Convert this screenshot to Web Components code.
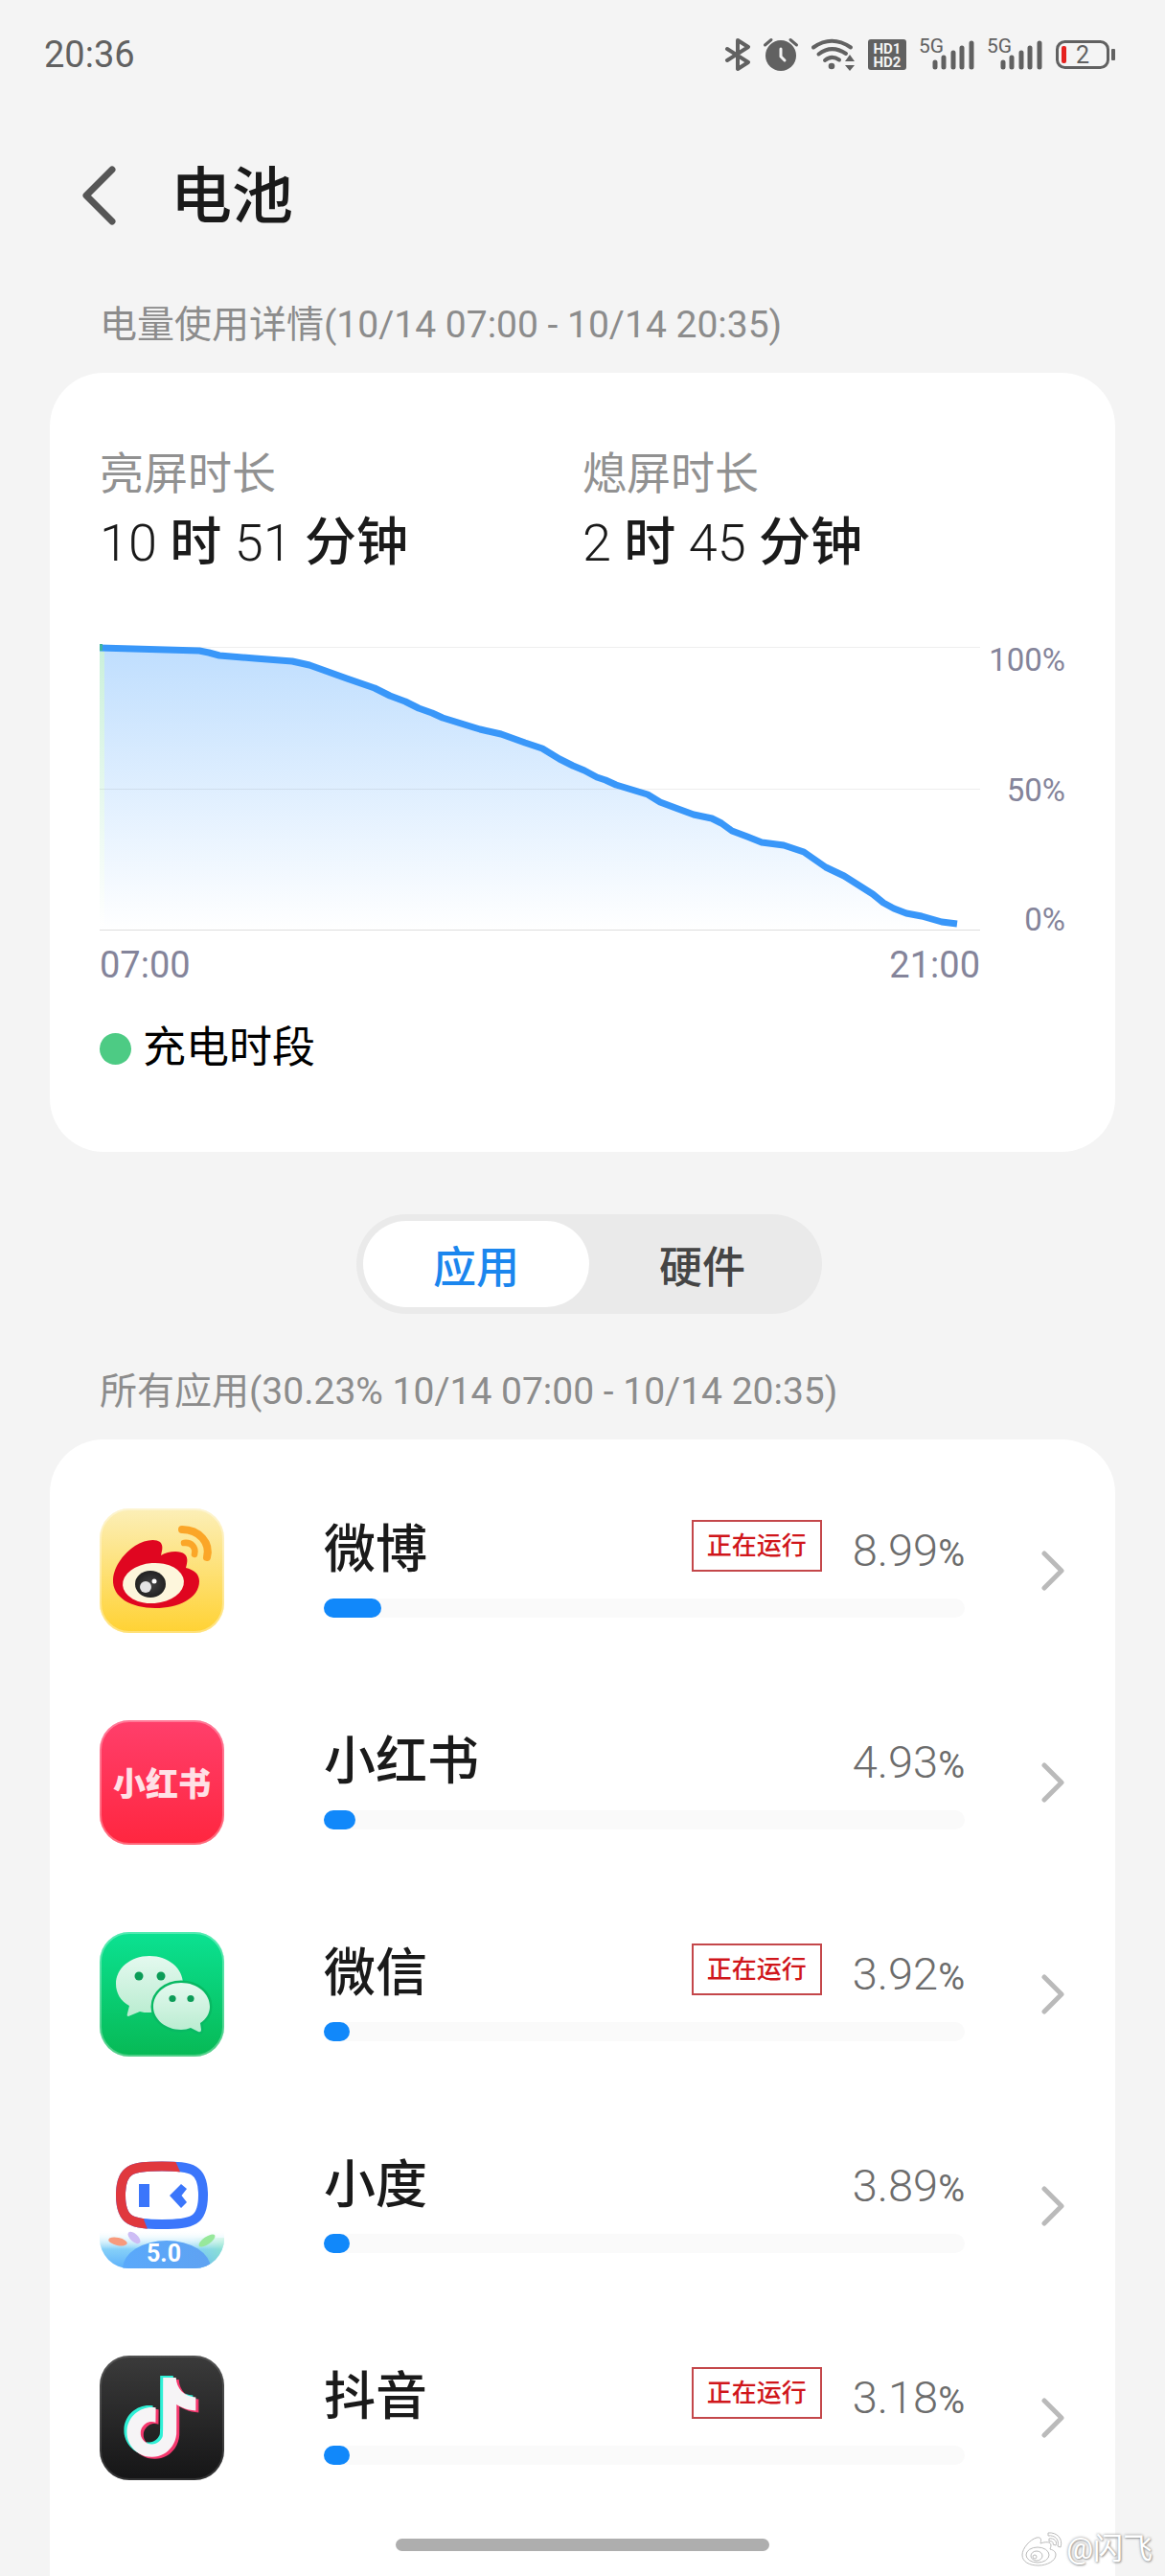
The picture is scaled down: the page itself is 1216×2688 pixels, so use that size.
<!DOCTYPE html>
<html lang="zh-CN">
<head>
<meta charset="utf-8">
<meta name="viewport" content="width=device-width, initial-scale=1">
<title>电池</title>
<style>
    body {
        margin: 0;
        background: #f4f4f4;
        color: #1a1a1a;
        font-family: Roboto, "Noto Sans CJK SC", sans-serif;
    }
</style>
</head>
<body>
<battery-page></battery-page>

<script>
// Drawings for the app icons, all on a 130x130 box
const APP_ICONS = {
    weibo: `
        <defs>
            <linearGradient id="bg" x2="0" y2="1"><stop offset="0" stop-color="#fcefb8"/><stop offset="1" stop-color="#ffd233"/></linearGradient>
            <radialGradient id="pupil"><stop offset="0" stop-color="#444"/><stop offset="1" stop-color="#222"/></radialGradient>
        </defs>
        <rect width="130" height="130" rx="31" fill="url(#bg)"/>
        <path d="M14 74C15 60 26 46 37 39C46 33 58 31 63 35C67 39 65 44 64 49C71 45 83 43 89 48C93 52 91 58 90 62C98 64 104 68 104 76C104 94 82 104 58 104C33 104 13 93 14 74Z" fill="#e00620"/>
        <ellipse cx="56" cy="78" rx="32" ry="21" fill="#fdf6dc" transform="rotate(-4 56 78)"/>
        <ellipse cx="53" cy="79" rx="16" ry="14" fill="url(#pupil)"/>
        <circle cx="48" cy="82" r="6" fill="#e4e4e4"/>
        <circle cx="57" cy="76" r="2.5" fill="#fff"/>
        <path d="M86 22C104 22 116 36 112 51" fill="none" stroke="#fba628" stroke-width="8" stroke-linecap="round"/>
        <path d="M88 36C96 35 101 41 99 48" fill="none" stroke="#fba628" stroke-width="6.5" stroke-linecap="round"/>
        <rect x="1" y="1" width="128" height="128" rx="30" fill="none" stroke="#fff" stroke-opacity=".35" stroke-width="2"/>`,
    redbook: `
        <defs><linearGradient id="bg" x2="0" y2="1"><stop offset="0" stop-color="#ff3f6b"/><stop offset="1" stop-color="#ff263f"/></linearGradient></defs>
        <rect width="130" height="130" rx="31" fill="url(#bg)"/>
        <text x="65" y="79" text-anchor="middle" font-size="34" font-weight="900" fill="#ffe0e6">小红书</text>
        <rect x="1" y="1" width="128" height="128" rx="30" fill="none" stroke="#fff" stroke-opacity=".3" stroke-width="2"/>`,
    wechat: `
        <defs>
            <linearGradient id="bg" x2="0" y2="1"><stop offset="0" stop-color="#0be292"/><stop offset="1" stop-color="#07b955"/></linearGradient>
            <linearGradient id="bubble" x2="0" y2="1"><stop offset="0" stop-color="#e4f9ef"/><stop offset="1" stop-color="#b9ecd0"/></linearGradient>
        </defs>
        <rect width="130" height="130" rx="31" fill="url(#bg)"/>
        <path d="M52 25C72 25 87 38 87 54C87 71 72 84 52 84C48 84 45 84 42 83L30 88Q28 88 29 85L31 77C22 72 17 64 17 54C17 38 32 25 52 25Z" fill="url(#bubble)"/>
        <path d="M85 53C102 53 115 64 115 78C115 85 111 91 105 95L106 102Q106 105 103 104L95 100C92 101 89 102 85 102C69 102 56 91 56 78C56 64 69 53 85 53Z" fill="url(#bubble)" stroke="#08b963" stroke-width="5" paint-order="stroke"/>
        <g fill="#0b9c57"><circle cx="41" cy="46" r="4.5"/><circle cx="64" cy="46" r="4.5"/><circle cx="76" cy="69.5" r="3.6"/><circle cx="95" cy="69.5" r="3.6"/></g>
        <rect x="1" y="1" width="128" height="128" rx="30" fill="none" stroke="#fff" stroke-opacity=".3" stroke-width="2"/>`,
    xiaodu: `
        <defs>
            <clipPath id="round"><rect width="130" height="130" rx="31"/></clipPath>
            <clipPath id="left"><path d="M0 0H79V18L84 29L46 79L50 89V130H0Z"/></clipPath>
            <linearGradient id="sky" x2="0" y2="1"><stop offset="0" stop-color="#9fe6f5" stop-opacity="0"/><stop offset=".5" stop-color="#86d0f8"/><stop offset="1" stop-color="#5cb0fb"/></linearGradient>
            <linearGradient id="hill" x2="1" y2="0"><stop offset="0" stop-color="#5aa9fb"/><stop offset="1" stop-color="#5fa2f2"/></linearGradient>
            <linearGradient id="side"><stop offset=".75" stop-color="#8ee8c0" stop-opacity="0"/><stop offset="1" stop-color="#8ee8c0" stop-opacity=".7"/></linearGradient>
            <linearGradient id="fade" x2="0" y2="1"><stop offset="0" stop-color="#fff"/><stop offset="1" stop-color="#fff" stop-opacity="0"/></linearGradient>
        </defs>
        <rect width="130" height="130" rx="31" fill="#fff"/>
        <g clip-path="url(#round)">
            <rect y="90" width="130" height="40" fill="url(#sky)"/>
            <rect y="98" width="130" height="32" fill="url(#side)"/>
            <rect y="90" width="130" height="20" fill="url(#fade)"/>
            <ellipse cx="70" cy="130" rx="46" ry="29" fill="url(#hill)"/>
            <ellipse cx="19" cy="102" rx="10" ry="4" fill="#f79a7c" transform="rotate(12 19 102)"/>
            <ellipse cx="36" cy="98" rx="8" ry="4" fill="#cdbdf5" transform="rotate(42 36 98)"/>
            <ellipse cx="112" cy="101" rx="10" ry="4" fill="#97e89b" transform="rotate(-35 112 101)"/>
        </g>
        <path d="M65 23.5C97 23.5 108 26 108 53.5C108 81 97 84 65 84C33 84 22 81 22 53.5C22 26 33 23.5 65 23.5Z" fill="#fff" stroke="#3b76fb" stroke-width="10"/>
        <path d="M65 23.5C97 23.5 108 26 108 53.5C108 81 97 84 65 84C33 84 22 81 22 53.5C22 26 33 23.5 65 23.5Z" fill="none" stroke="#e0383e" stroke-width="10" clip-path="url(#left)"/>
        <path d="M41 42H52V66H41ZM73 54L85 42L91 47L85.5 54L91 61L85 67Z" fill="#3b76fb"/>
        <text x="67" y="123" text-anchor="middle" font-size="25" font-weight="700" fill="#fff">5.0</text>`,
    douyin: `
        <defs>
            <linearGradient id="bg" x2="0" y2="1"><stop offset="0" stop-color="#3b3b3b"/><stop offset="1" stop-color="#151516"/></linearGradient>
            <path id="note" d="M12.525.02c1.31-.02 2.61-.01 3.91-.02.08 1.53.63 3.09 1.75 4.17 1.12 1.11 2.7 1.62 4.24 1.79v4.03c-1.44-.05-2.89-.35-4.2-.97-.57-.26-1.1-.59-1.62-.93-.01 2.92.01 5.84-.02 8.75-.08 1.4-.54 2.79-1.35 3.94-1.31 1.92-3.58 3.17-5.91 3.21-1.43.08-2.86-.31-4.08-1.03-2.02-1.19-3.44-3.37-3.65-5.71-.02-.5-.03-1-.01-1.49.18-1.9 1.12-3.72 2.58-4.96 1.66-1.44 3.98-2.13 6.15-1.72.02 1.48-.04 2.96-.04 4.44-.99-.32-2.15-.23-3.02.37-.63.41-1.11 1.04-1.36 1.75-.21.51-.15 1.07-.14 1.61.24 1.64 1.82 3.02 3.5 2.87 1.12-.01 2.19-.66 2.77-1.61.19-.33.4-.67.41-1.06.1-1.79.06-3.57.07-5.36.01-4.03-.01-8.05.02-12.07z"/>
        </defs>
        <rect width="130" height="130" rx="31" fill="url(#bg)"/>
        <use href="#note" fill="#2ff0d6" transform="translate(20 21) scale(3.45)"/>
        <use href="#note" fill="#f5386e" transform="translate(26 25) scale(3.45)"/>
        <use href="#note" fill="#f6f4f6" transform="translate(23 23) scale(3.45)"/>
        <rect x="1" y="1" width="128" height="128" rx="30" fill="none" stroke="#fff" stroke-opacity=".12" stroke-width="2"/>`
};

class StatusBar extends HTMLElement {
    constructor() {
        super();
        const shadow = this.attachShadow({mode: 'open'});

        const signal = `
            <svg width="57" height="34" viewBox="0 0 57 34">
                <text x="-1" y="15" font-size="21">5G</text>
                <path d="M16 25V30M25 20V30M35 15V30M44 10V30M54 5V30" stroke="#616161" stroke-width="5" stroke-linecap="round"/>
            </svg>`;

        shadow.innerHTML = `
            <style>
                :host {
                    display: flex;
                    align-items: center;
                    justify-content: space-between;
                    height: 114px;
                    padding: 0 52px 0 46px;
                    color: #616161;
                }
                .time { font-size: 38px; }
                .icons { display: flex; gap: 14px; }
                svg { display: block; fill: #616161; overflow: visible; }
                .line { fill: none; stroke: #616161; stroke-linecap: round; stroke-linejoin: round; }
            </style>
            <span class="time">${this.getAttribute('time')}</span>
            <div class="icons">
                <svg width="26" height="34" viewBox="0 0 26 34">
                    <path class="line" stroke-width="4" d="M2 11L24 25L13 32V2L24 9L2 23"/>
                </svg>
                <svg width="36" height="34" viewBox="0 0 36 34">
                    <circle cx="18" cy="18" r="16"/>
                    <path class="line" stroke-width="3" d="M1.5 7L8 1.5M34.5 7L28 1.5"/>
                    <path d="M18 11V19L22 23" fill="none" stroke="#f4f4f4" stroke-width="3" stroke-linecap="round"/>
                </svg>
                <svg width="45" height="34" viewBox="0 0 45 34">
                    <path class="line" stroke-width="4" d="M2 9.5Q21 -4 41 9.5M7.5 16.5Q21 6 36 16M14 23Q21 17 29 22.5"/>
                    <circle cx="21" cy="29" r="3.3"/>
                    <path d="M40 17L45 24H35ZM40 34L45 28H35Z"/>
                </svg>
                <svg width="40" height="34" viewBox="0 0 40 34">
                    <rect y="1" width="40" height="32" rx="3"/>
                    <g font-size="15" font-weight="700" fill="#f4f4f4" text-anchor="middle">
                        <text x="20" y="16">HD1</text>
                        <text x="20" y="30">HD2</text>
                    </g>
                </svg>
                ${signal}
                ${signal}
                <svg width="62" height="34" viewBox="0 0 62 34">
                    <rect class="line" stroke-width="3" x="1.5" y="3.5" width="53" height="27" rx="8"/>
                    <rect x="6" y="8" width="5" height="18" rx="2" fill="#e5221f"/>
                    <text x="28" y="26" text-anchor="middle" font-size="25">2</text>
                    <rect x="58" y="11" width="4" height="12" rx="1"/>
                </svg>
            </div>
        `;
    }
}

class PageHeader extends HTMLElement {
    constructor() {
        super();
        const shadow = this.attachShadow({mode: 'open'});
        shadow.innerHTML = `
            <style>
                :host {
                    display: flex;
                    align-items: center;
                    height: 180px;
                    padding: 0 84px;
                    gap: 56px;
                }
                button { border: 0; padding: 0; background: none; }
                svg { display: block; }
                h1 { margin: 0; padding-top: 4px; font-size: 64px; line-height: 80px; font-weight: 500; }
            </style>
            <button type="button" aria-label="返回">
                <svg width="38" height="62" viewBox="0 0 38 62">
                    <path d="M33 4L6 31L33 58" fill="none" stroke="#565656" stroke-width="7" stroke-linecap="round" stroke-linejoin="round"/>
                </svg>
            </button>
            <h1><slot></slot></h1>
        `;
    }
}

class SectionTitle extends HTMLElement {
    constructor() {
        super();
        this.attachShadow({mode: 'open'}).innerHTML = `
            <style>
                :host { display: block; padding: 0 104px 5px; }
                h2 { margin: 0; font-size: 39px; line-height: 90px; font-weight: 400; color: #8c8c8c; }
            </style>
            <h2><slot></slot></h2>
        `;
    }
}

class InfoCard extends HTMLElement {
    constructor() {
        super();
        this.attachShadow({mode: 'open'}).innerHTML = `
            <style>
                :host {
                    display: block;
                    margin: 0 52px;
                    border-radius: 56px;
                    background: #fff;
                }
            </style>
            <slot></slot>
        `;
    }
}

class TimeStat extends HTMLElement {
    constructor() {
        super();
        this.attachShadow({mode: 'open'}).innerHTML = `
            <style>
                :host { display: block; }
                .label { font-size: 46px; line-height: 64px; color: #919191; }
                .value { font-size: 54px; line-height: 82px; font-weight: 500; }
                ::slotted(b) { font-weight: 300; }
            </style>
            <div class="label">${this.getAttribute('label')}</div>
            <div class="value"><slot></slot></div>
        `;
    }
}

// Battery level over the day, area below the line fades out to the bottom
class BatteryChart extends HTMLElement {
    constructor() {
        super();
        const shadow = this.attachShadow({mode: 'open'});

        const points = [
            [0, 5], [104, 8], [114, 10], [125, 13], [162, 16], [201, 19], [219, 23], [258, 37], [287, 47],
            [303, 55], [319, 61], [333, 68], [347, 73], [358, 78], [397, 90], [419, 95], [444, 104],
            [462, 110], [480, 121], [494, 128], [506, 133], [519, 140], [528, 143], [539, 148], [572, 158],
            [585, 166], [601, 172], [620, 179], [639, 183], [649, 188], [660, 196], [676, 202], [691, 208],
            [714, 211], [735, 218], [758, 234], [777, 243], [807, 262], [818, 271], [829, 277], [842, 282],
            [858, 285], [879, 291], [895, 293]
        ];
        const line = points.map(p => p.join(' ')).join('L');

        shadow.innerHTML = `
            <style>
                :host {
                    display: grid;
                    grid-template-columns: 1fr 89px;
                    color: #84849a;
                }
                svg { display: block; width: 100%; height: auto; }
                .levels {
                    display: flex;
                    flex-direction: column;
                    justify-content: space-between;
                    text-align: right;
                    font-size: 33px;
                    line-height: 36px;
                }
                .plot { padding-bottom: 7px; }
                .hours {
                    display: flex;
                    justify-content: space-between;
                    font-size: 38px;
                    line-height: 58px;
                }
            </style>
            <div class="plot">
                <svg viewBox="0 0 919 300">
                    <defs>
                        <linearGradient id="area" gradientUnits="userSpaceOnUse" x1="0" y1="4" x2="0" y2="300">
                            <stop offset="0" stop-color="#bfdefe"/><stop offset="1" stop-color="#fff"/>
                        </linearGradient>
                        <linearGradient id="charge" x2="0" y2="1">
                            <stop offset="0" stop-color="#caf0da"/><stop offset="1" stop-color="#fff"/>
                        </linearGradient>
                    </defs>
                    <path d="M0 4.5H919" stroke="#eee" stroke-width="1"/>
                    <path d="M${line}V299H0Z" fill="url(#area)"/>
                    <rect y="5" width="5" height="290" fill="url(#charge)"/>
                    <path d="M0 152.5H919" stroke="#000" stroke-opacity=".07" stroke-width="1"/>
                    <path d="M0 299.5H919" stroke="#ddd" stroke-width="1"/>
                    <path d="M${line}" fill="none" stroke="#3997f9" stroke-width="7" stroke-linejoin="round"/>
                    <rect y="1" width="3" height="7" fill="#3fb3a0"/>
                </svg>
            </div>
            <div class="levels"><span>100%</span><span>50%</span><span>0%</span></div>
            <div class="hours"><span>07:00</span><span>21:00</span></div>
        `;
    }
}

class ChartLegend extends HTMLElement {
    constructor() {
        super();
        this.attachShadow({mode: 'open'}).innerHTML = `
            <style>
                :host {
                    display: flex;
                    align-items: center;
                    gap: 12px;
                    font-size: 45px;
                    line-height: 64px;
                    color: #000;
                }
                i { width: 33px; height: 33px; border-radius: 50%; background: #4dcb84; }
            </style>
            <i></i><span><slot></slot></span>
        `;
    }
}

class SegmentSwitch extends HTMLElement {
    constructor() {
        super();
        const shadow = this.attachShadow({mode: 'open'});
        const names = this.getAttribute('options').split(',');

        shadow.innerHTML = `
            <style>
                :host { display: flex; justify-content: center; }
                div {
                    display: flex;
                    padding: 7px;
                    border-radius: 52px;
                    background: #eaeaea;
                }
                button {
                    width: 236px;
                    height: 90px;
                    padding: 0;
                    border: 0;
                    border-radius: 45px;
                    background: none;
                    font: inherit;
                    font-size: 45px;
                    font-weight: 500;
                    color: #454545;
                }
                button[aria-selected=true] { background: #fff; color: #1b86ee; }
            </style>
            <div role="tablist">
                ${names.map((name, i) => `<button type="button" role="tab" aria-selected="${i === 0}">${name}</button>`).join('')}
            </div>
        `;

        const buttons = shadow.querySelectorAll('button');
        buttons.forEach(button => {
            button.addEventListener('click', () => {
                buttons.forEach(b => b.setAttribute('aria-selected', b === button));
            });
        });
    }
}

class AppUsage extends HTMLElement {
    constructor() {
        super();
        const shadow = this.attachShadow({mode: 'open'});
        const usage = this.getAttribute('usage');

        shadow.innerHTML = `
            <style>
                :host { display: block; }
                a {
                    display: flex;
                    align-items: center;
                    height: 221px;
                    color: inherit;
                    text-decoration: none;
                }
                svg { display: block; flex: none; }
                .main { flex: 1; margin: 0 80px 0 104px; }
                .line {
                    display: flex;
                    align-items: center;
                    height: 76px;
                }
                .name { flex: 1; font-size: 54px; font-weight: 500; }
                .running {
                    border: 2px solid #c4474a;
                    padding: 0 14px;
                    margin-right: 32px;
                    font-size: 26px;
                    line-height: 50px;
                    font-weight: 500;
                    color: #d0161b;
                }
                .usage { padding-top: 10px; font-size: 47px; font-weight: 300; color: #6c6c6c; }
                .usage small { font-size: 38px; font-weight: 400; }
                .track {
                    height: 20px;
                    margin: 17px 0 15px;
                    border-radius: 10px;
                    background: #fafafa;
                }
                .fill {
                    height: 100%;
                    min-width: 27px;
                    border-radius: 10px;
                    background: #1188fa;
                }
            </style>
            <a href="#">
                <svg width="130" height="130" viewBox="0 0 130 130">${APP_ICONS[this.getAttribute('icon')]}</svg>
                <div class="main">
                    <div class="line">
                        <span class="name"><slot></slot></span>
                        ${this.hasAttribute('running') ? '<span class="running">正在运行</span>' : ''}
                        <span class="usage">${usage}<small>%</small></span>
                    </div>
                    <div class="track"><div class="fill" style="width: ${usage}%"></div></div>
                </div>
                <svg width="25" height="42" viewBox="0 0 25 42">
                    <path d="M3 3L21 21L3 39" fill="none" stroke="#bababa" stroke-width="5" stroke-linecap="round" stroke-linejoin="round"/>
                </svg>
            </a>
        `;
    }
}

class WaterMark extends HTMLElement {
    constructor() {
        super();
        this.attachShadow({mode: 'open'}).innerHTML = `
            <style>
                :host {
                    display: flex;
                    align-items: center;
                    gap: 4px;
                    font-size: 31px;
                    line-height: 36px;
                    color: #fff;
                    text-shadow: 0 0 3px #888, 1px 1px 2px #aaa;
                }
            </style>
            <svg width="43" height="36" viewBox="0 0 43 36" fill="#fff" stroke="#bbb" stroke-width="1">
                <path d="M1 24C1 17 9 8 16 6C21 5 21 8 20 12C25 10 31 10 31 14C31 16 30 17 30 18C34 19 36 21 36 24C36 30 27 35 18 35C8 35 1 31 1 24Z"/>
                <ellipse cx="17" cy="24" rx="12" ry="8"/>
                <ellipse cx="16" cy="25" rx="6" ry="5"/>
                <circle cx="14" cy="26" r="2"/>
                <path d="M28 1C37 0 44 7 41 16L38 15C40 8 35 3 28 4ZM29 7C34 6 38 10 36 14L33 13C34 11 32 9 29 10Z"/>
            </svg>
            <slot></slot>
        `;
    }
}

class BatteryPage extends HTMLElement {
    constructor() {
        super();
        this.attachShadow({mode: 'open'}).innerHTML = `
            <style>
                :host {
                    display: block;
                    position: relative;
                    height: 100vh;
                    overflow: hidden;
                }
                .summary { padding: 73px 52px 76px; }
                .stats {
                    display: grid;
                    grid-template-columns: 1fr 1fr;
                    margin-bottom: 63px;
                }
                chart-legend { margin-top: 26px; }
                segment-switch { margin: 65px 0 36px; padding-left: 14px; }
                .apps { padding: 26px 52px 120px; }
                .home-bar {
                    position: absolute;
                    left: 34%;
                    right: 34%;
                    bottom: 26px;
                    height: 13px;
                    border-radius: 7px;
                    background: #aeaeae;
                }
                water-mark { position: absolute; right: 13px; bottom: 10px; }
            </style>
            <status-bar time="20:36"></status-bar>
            <page-header>电池</page-header>
            <section-title>电量使用详情(10/14 07:00 - 10/14 20:35)</section-title>
            <info-card>
                <div class="summary">
                    <div class="stats">
                        <time-stat label="亮屏时长"><b>10</b> 时 <b>51</b> 分钟</time-stat>
                        <time-stat label="熄屏时长"><b>2</b> 时 <b>45</b> 分钟</time-stat>
                    </div>
                    <battery-chart></battery-chart>
                    <chart-legend>充电时段</chart-legend>
                </div>
            </info-card>
            <segment-switch options="应用,硬件"></segment-switch>
            <section-title>所有应用(30.23% 10/14 07:00 - 10/14 20:35)</section-title>
            <info-card>
                <div class="apps">
                    <app-usage icon="weibo" usage="8.99" running>微博</app-usage>
                    <app-usage icon="redbook" usage="4.93">小红书</app-usage>
                    <app-usage icon="wechat" usage="3.92" running>微信</app-usage>
                    <app-usage icon="xiaodu" usage="3.89">小度</app-usage>
                    <app-usage icon="douyin" usage="3.18" running>抖音</app-usage>
                </div>
            </info-card>
            <div class="home-bar"></div>
            <water-mark>@闪飞</water-mark>
        `;
    }
}

customElements.define('status-bar', StatusBar);
customElements.define('page-header', PageHeader);
customElements.define('section-title', SectionTitle);
customElements.define('info-card', InfoCard);
customElements.define('time-stat', TimeStat);
customElements.define('battery-chart', BatteryChart);
customElements.define('chart-legend', ChartLegend);
customElements.define('segment-switch', SegmentSwitch);
customElements.define('app-usage', AppUsage);
customElements.define('water-mark', WaterMark);
customElements.define('battery-page', BatteryPage);
</script>
</body>
</html>
